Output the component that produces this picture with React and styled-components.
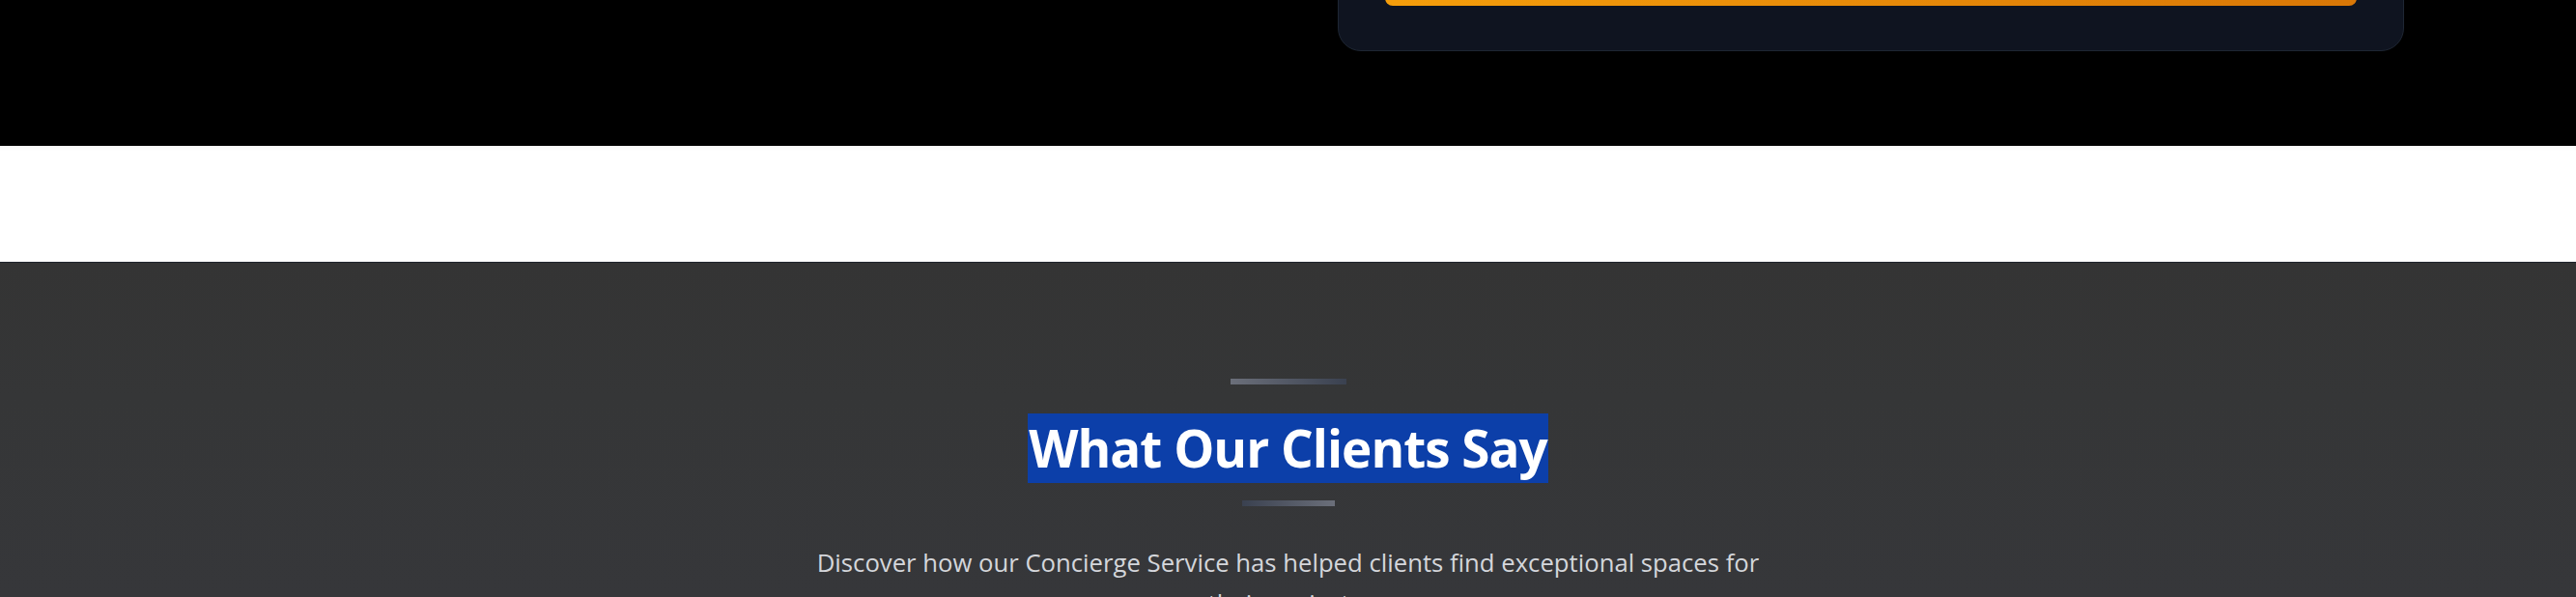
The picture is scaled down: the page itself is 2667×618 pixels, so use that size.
import React from 'react'
import styled, { createGlobalStyle } from 'styled-components'

const GlobalStyle = createGlobalStyle`
  * { box-sizing: border-box; }
  html, body { margin: 0; padding: 0; background: #ffffff; }
  body {
    font-family: "Open Sans", "Noto Sans", "Liberation Sans", sans-serif;
    overflow: hidden;
  }
`

const App = () => {
    return (
        <Page>
            <GlobalStyle />
            <Hero>
                <HeroInner>
                    <HeroLeft />
                    <QuoteCard>
                        <SubmitButton aria-label="Request a consultation" />
                    </QuoteCard>
                </HeroInner>
            </Hero>
            <Spacer />
            <Testimonials>
                <Rule $width={120} $reverse={false} />
                <Title>
                    <Selected>What Our Clients Say</Selected>
                </Title>
                <Rule $width={96} $reverse={true} />
                <Lead>
                    Discover how our Concierge Service has helped clients find exceptional spaces for
                    their projects.
                </Lead>
            </Testimonials>
        </Page>
    )
}

const Page = styled.div`
    width: 100%;
    min-height: 618px;
`
const Hero = styled.section`
    background: #000000;
    height: 151px;
    overflow: hidden;
`
const HeroInner = styled.div`
    max-width: 2310px;
    margin: -100px auto 0;
    display: grid;
    grid-template-columns: 1fr 1104px;
    gap: 102px;
    padding-left: 1px;
`
const HeroLeft = styled.div``
const QuoteCard = styled.div`
    background: #0f1420;
    border: 1px solid #1e2633;
    border-radius: 24px;
    padding: 48px 48px 46px;
`
const SubmitButton = styled.button`
    display: block;
    width: 100%;
    height: 57px;
    border: none;
    border-radius: 8px;
    background: linear-gradient(90deg, #f59e0b 0%, #d97706 100%);
    cursor: pointer;
`
const Spacer = styled.div`
    height: 120px;
    background: #ffffff;
    box-shadow: inset 0 6px 6px -6px rgba(0, 0, 0, 0.06);
`
const Testimonials = styled.section`
    background: linear-gradient(180deg, #343434 0%, #353637 40%, #36373a 100%);
    border-top: 1px solid #1f242c;
    padding-top: 120px;
    height: 347px;
    display: flex;
    flex-direction: column;
    align-items: center;
    overflow: hidden;
    & > * { flex-shrink: 0; }
`
const Rule = styled.div`
    width: ${p => p.$width}px;
    height: 6px;
    background: linear-gradient(
        90deg,
        ${p => (p.$reverse ? '#3a4150' : '#6b6f7a')} 0%,
        ${p => (p.$reverse ? '#6b6f7a' : '#3a4150')} 100%
    );
`
const Title = styled.h2`
    margin: 30px 0 18px;
    font-size: 53px;
    font-weight: 700;
    line-height: 72px;
    color: #ffffff;
    letter-spacing: -1px;
`
const Selected = styled.span`
    display: inline-block;
    background: #0c3fa9;
    padding: 0 1px;
`
const Lead = styled.p`
    margin: 38px 0 0;
    max-width: 1024px;
    font-size: 25.7px;
    line-height: 42px;
    color: #d4d6db;
    text-align: center;
`

export default App
